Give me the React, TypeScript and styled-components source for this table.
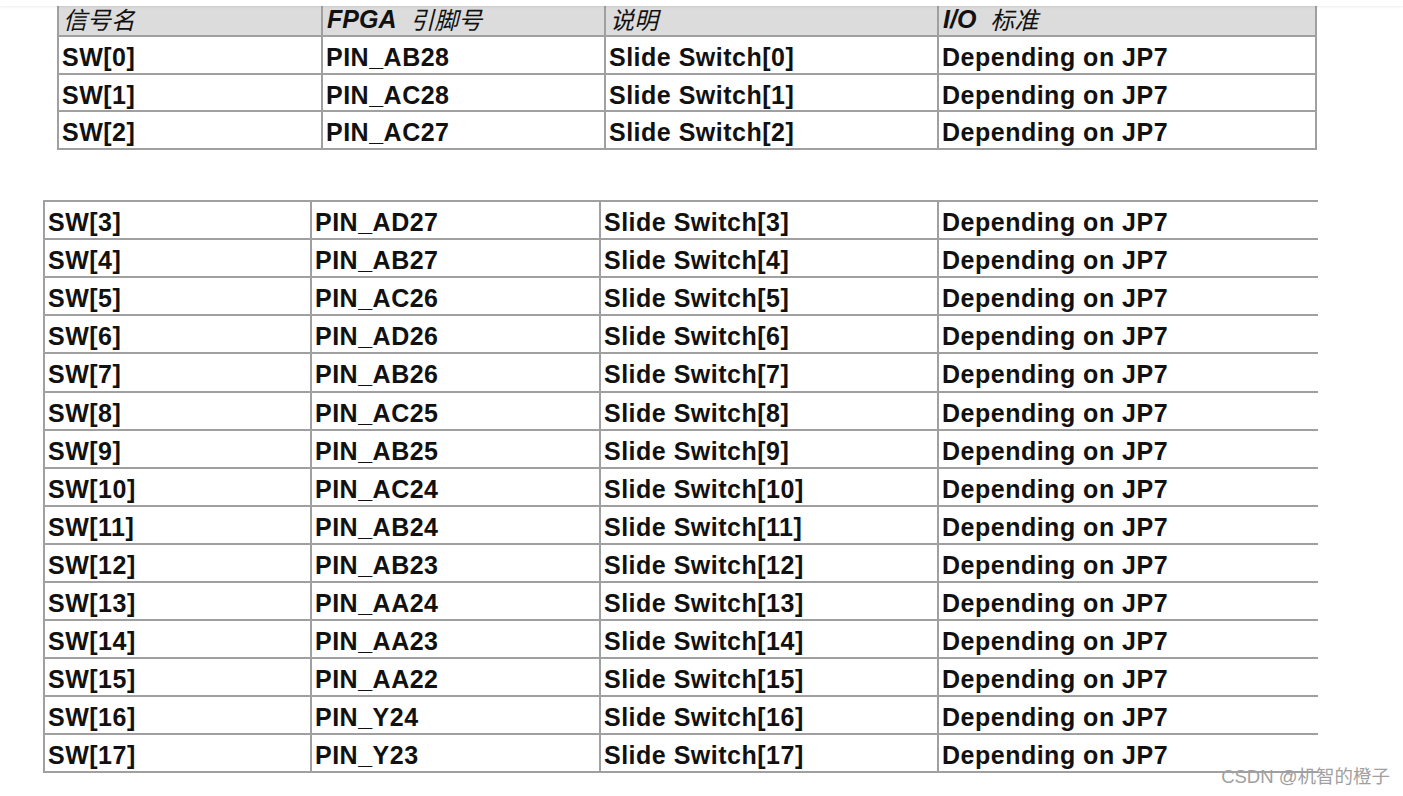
import React from 'react'
import styled, { createGlobalStyle } from 'styled-components'

const GlobalStyle = createGlobalStyle`
  html, body {
    margin: 0;
    padding: 0;
    background: #ffffff;
  }
  body {
    font-family: "Liberation Sans", Arial, "Noto Sans CJK SC", sans-serif;
    color: #111;
  }
`

const Page = styled.div`
  position: relative;
  width: 1403px;
  height: 796px;
  overflow: hidden;
  background: #fff;
`

const TopBar = styled.div`
  position: relative;
  z-index: 2;
  height: 6px;
  background: #ffffff;
  box-shadow: 0 1px 3px rgba(0, 0, 0, 0.08);
`

interface ITable {
  cols: string;
  left: number;
  top: number;
  boxed?: boolean;
}

const Table = styled.div<ITable>`
  display: grid;
  grid-template-columns: ${p => p.cols};
  margin-left: ${p => p.left}px;
  margin-top: ${p => p.top}px;
  width: max-content;
  border-left: 2px solid #a0a0a0;
  border-top: ${p => (p.boxed ? '0' : '2px solid #a0a0a0')};
  border-right: ${p => (p.boxed ? '2px solid #a0a0a0' : '0')};
`

interface ICell {
  h: number;
  last?: boolean;
}

const Cell = styled.div<ICell>`
  box-sizing: border-box;
  height: ${p => p.h}px;
  display: flex;
  align-items: center;
  padding: 5px 0 0 3px;
  border-bottom: 2px solid #a0a0a0;
  border-right: ${p => (p.last ? '0' : '2px solid #a0a0a0')};
  font-size: 25px;
  line-height: 1;
  letter-spacing: 0.5px;
  font-weight: 700;
  white-space: nowrap;
`

const HeadCell = styled(Cell)`
  background: #dcdcdc;
  font-style: italic;
  padding: 0 0 3px 4px;
  letter-spacing: 0;
`

const Cjk = styled.span`
  font-family: "Noto Sans CJK SC", sans-serif;
  font-weight: 400;
  font-style: italic;
  font-size: 24px;
  line-height: 1;
`

const Watermark = styled.div`
  position: absolute;
  right: 13px;
  bottom: 8px;
  font-family: "Liberation Sans", "Noto Sans CJK SC", sans-serif;
  font-size: 18.5px;
  color: #a0a0a0;
`

interface IPin {
  sig: string;
  pin: string;
}

const first: IPin[] = [
  { sig: 'SW[0]', pin: 'PIN_AB28' },
  { sig: 'SW[1]', pin: 'PIN_AC28' },
  { sig: 'SW[2]', pin: 'PIN_AC27' },
]

const second: IPin[] = [
  { sig: 'SW[3]', pin: 'PIN_AD27' },
  { sig: 'SW[4]', pin: 'PIN_AB27' },
  { sig: 'SW[5]', pin: 'PIN_AC26' },
  { sig: 'SW[6]', pin: 'PIN_AD26' },
  { sig: 'SW[7]', pin: 'PIN_AB26' },
  { sig: 'SW[8]', pin: 'PIN_AC25' },
  { sig: 'SW[9]', pin: 'PIN_AB25' },
  { sig: 'SW[10]', pin: 'PIN_AC24' },
  { sig: 'SW[11]', pin: 'PIN_AB24' },
  { sig: 'SW[12]', pin: 'PIN_AB23' },
  { sig: 'SW[13]', pin: 'PIN_AA24' },
  { sig: 'SW[14]', pin: 'PIN_AA23' },
  { sig: 'SW[15]', pin: 'PIN_AA22' },
  { sig: 'SW[16]', pin: 'PIN_Y24' },
  { sig: 'SW[17]', pin: 'PIN_Y23' },
]

const rowCells = (row: IPin, h: number) => {
  // number from the signal name, e.g. SW[12] -> 12
  const n = row.sig.replace(/[^0-9]/g, '')
  return (
    <React.Fragment key={row.sig}>
      <Cell h={h}>{row.sig}</Cell>
      <Cell h={h}>{row.pin}</Cell>
      <Cell h={h}>Slide Switch[{n}]</Cell>
      <Cell h={h} last>Depending on JP7</Cell>
    </React.Fragment>
  )
}

const App: React.FC = () => {
  return (
    <Page>
      <GlobalStyle />
      <TopBar />

      <Table cols="264px 283px 333px 376px" left={57} top={0} boxed>
        <HeadCell h={31}><Cjk>信号名</Cjk></HeadCell>
        <HeadCell h={31}>FPGA&nbsp;&nbsp;<Cjk>引脚号</Cjk></HeadCell>
        <HeadCell h={31}><Cjk>说明</Cjk></HeadCell>
        <HeadCell h={31} last>I/O&nbsp;&nbsp;<Cjk>标准</Cjk></HeadCell>
        {first.map(r => rowCells(r, 37.7))}
      </Table>

      <Table cols="267px 289px 338px 379px" left={43} top={50}>
        {second.map(r => rowCells(r, 38.1))}
      </Table>

      <Watermark>CSDN @机智的橙子</Watermark>
    </Page>
  )
}

export default App
